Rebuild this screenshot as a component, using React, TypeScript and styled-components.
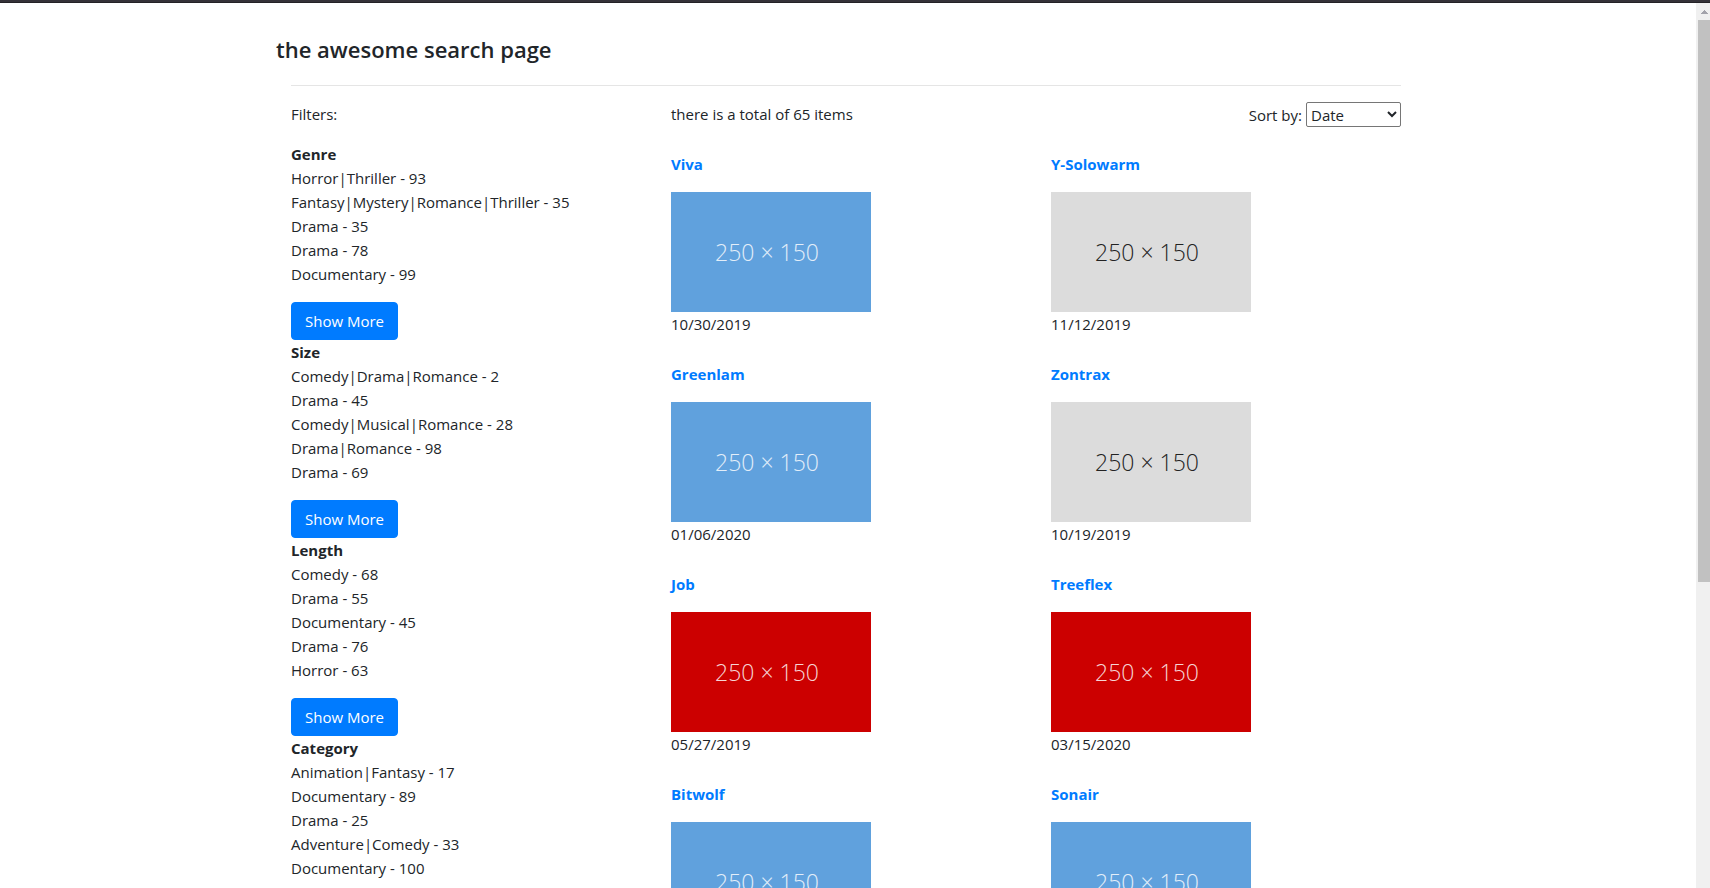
import React from "react";
import styled, { createGlobalStyle } from "styled-components";

type Tone = "blue" | "gray" | "red";

const tones: Record<Tone, { fill: string; ink: string }> = {
  blue: { fill: "#60a1dd", ink: "#e3eef9" },
  gray: { fill: "#dcdcdc", ink: "#222222" },
  red: { fill: "#cc0000", ink: "#f6d4d4" },
};

const filters = [
  {
    name: "Genre",
    expandable: true,
    entries: [
      "Horror|Thriller - 93",
      "Fantasy|Mystery|Romance|Thriller - 35",
      "Drama - 35",
      "Drama - 78",
      "Documentary - 99",
    ],
  },
  {
    name: "Size",
    expandable: true,
    entries: [
      "Comedy|Drama|Romance - 2",
      "Drama - 45",
      "Comedy|Musical|Romance - 28",
      "Drama|Romance - 98",
      "Drama - 69",
    ],
  },
  {
    name: "Length",
    expandable: true,
    entries: ["Comedy - 68", "Drama - 55", "Documentary - 45", "Drama - 76", "Horror - 63"],
  },
  {
    name: "Category",
    expandable: false,
    entries: [
      "Animation|Fantasy - 17",
      "Documentary - 89",
      "Drama - 25",
      "Adventure|Comedy - 33",
      "Documentary - 100",
    ],
  },
];

const items: { name: string; date?: string; tone: Tone }[] = [
  { name: "Viva", date: "10/30/2019", tone: "blue" },
  { name: "Y-Solowarm", date: "11/12/2019", tone: "gray" },
  { name: "Greenlam", date: "01/06/2020", tone: "blue" },
  { name: "Zontrax", date: "10/19/2019", tone: "gray" },
  { name: "Job", date: "05/27/2019", tone: "red" },
  { name: "Treeflex", date: "03/15/2020", tone: "red" },
  { name: "Bitwolf", tone: "blue" },
  { name: "Sonair", tone: "blue" },
];

const GlobalStyle = createGlobalStyle`
  *, *::before, *::after { box-sizing: border-box; }
  body {
    margin: 0;
    background: #fff;
    color: #212529;
    font-family: "Segoe UI", "Open Sans", "Noto Sans", sans-serif;
    font-size: 15px;
    line-height: 24px;
  }
`;

const Screen = styled.div`
  display: flex;
  flex-direction: column;
  height: 100vh;
`;

const TopEdge = styled.div`
  flex: none;
  height: 3px;
  background: #353238;
  border-bottom: 1px solid #242226;
`;

const Viewport = styled.div`
  flex: 1;
  display: flex;
  min-height: 0;
`;

const Scroller = styled.div`
  flex: 1;
  overflow-y: auto;
  scrollbar-width: none;
  padding-right: 4px;
`;

const ScrollRail = styled.div`
  flex: none;
  display: flex;
  flex-direction: column;
  width: 14px;
  padding-left: 2px;
  background: #f0f0f0;
`;

const RailArrow = styled.svg`
  flex: none;
  width: 12px;
  height: 17px;
`;

const RailThumb = styled.div`
  flex: 11;
  background: #c1c1c1;
`;

const RailSpace = styled.div`
  flex: 6;
`;

const Container = styled.main`
  max-width: 1140px;
  margin: 0 auto;
  padding-top: 32px;
`;

const Title = styled.h1`
  margin: 0;
  font-size: 22px;
  line-height: 28px;
  font-weight: 600;
`;

const Rule = styled.hr`
  margin: 22px 15px 16px;
  border: 0;
  border-top: 1px solid #e5e5e5;
`;

const Columns = styled.div`
  display: grid;
  grid-template-columns: 1fr 2fr;
`;

const Column = styled.section`
  padding: 0 15px;
`;

const Intro = styled.p`
  margin: 0 0 16px;
`;

const GroupName = styled.h2`
  margin: 0;
  font-size: 15px;
  line-height: 24px;
  font-weight: 700;
`;

const EntryList = styled.ul`
  margin: 0 0 16px;
  padding: 0;
  list-style: none;
`;

const ShowMore = styled.button`
  display: block;
  min-width: 107px;
  height: 38px;
  padding: 0 12px;
  border: 1px solid #007bff;
  border-radius: 4px;
  background: #007bff;
  color: #fff;
  font: inherit;
  cursor: pointer;
`;

const Summary = styled.div`
  display: flex;
  justify-content: space-between;
  height: 40px;
`;

const Sort = styled.div`
  display: flex;
  align-items: center;
  gap: 4px;
  height: 25px;
`;

const SortSelect = styled.select`
  width: 95px;
  height: 25px;
  border: 1px solid #767676;
  border-radius: 2px;
  background: #fff;
  color: #212529;
  font: inherit;
`;

const Results = styled.div`
  display: grid;
  grid-template-columns: 1fr 1fr;
  column-gap: 30px;
`;

const Card = styled.article`
  padding-top: 10px;
  margin-bottom: 16px;
`;

const CardLink = styled.a`
  display: block;
  margin-bottom: 16px;
  color: #007bff;
  font-weight: 700;
  text-decoration: none;
`;

const Placeholder = styled.div<{ $tone: Tone }>`
  display: flex;
  align-items: center;
  justify-content: center;
  width: 200px;
  height: 120px;
  background: ${(p) => tones[p.$tone].fill};
  color: ${(p) => tones[p.$tone].ink};
  font-family: "Open Sans", sans-serif;
  font-size: 23px;
  font-weight: 300;
  padding-right: 8px;
`;

export default function App() {
  return (
    <Screen>
      <GlobalStyle />
      <TopEdge />
      <Viewport>
        <Scroller>
          <Container>
            <Title>the awesome search page</Title>
            <Rule />
            <Columns>
              <Column>
                <Intro>Filters:</Intro>
                {filters.map((group) => (
                  <React.Fragment key={group.name}>
                    <GroupName>{group.name}</GroupName>
                    <EntryList>
                      {group.entries.map((entry) => (
                        <li key={entry}>{entry}</li>
                      ))}
                    </EntryList>
                    {group.expandable && <ShowMore type="button">Show More</ShowMore>}
                  </React.Fragment>
                ))}
              </Column>
              <Column>
                <Summary>
                  <span>there is a total of 65 items</span>
                  <Sort>
                    <label htmlFor="sort">Sort by:</label>
                    <SortSelect id="sort" defaultValue="Date">
                      <option>Date</option>
                    </SortSelect>
                  </Sort>
                </Summary>
                <Results>
                  {items.map((item) => (
                    <Card key={item.name}>
                      <CardLink href="#">{item.name}</CardLink>
                      <Placeholder $tone={item.tone}>250 × 150</Placeholder>
                      {item.date && <div>{item.date}</div>}
                    </Card>
                  ))}
                </Results>
              </Column>
            </Columns>
          </Container>
        </Scroller>
        <ScrollRail aria-hidden="true">
          <RailArrow viewBox="0 0 12 17" shapeRendering="crispEdges">
            <path d="M3 11V10H4V9H5V8H6V7H7V8H8V9H9V10H10V11Z" fill="#a3a3ab" />
          </RailArrow>
          <RailThumb />
          <RailSpace />
        </ScrollRail>
      </Viewport>
    </Screen>
  );
}
